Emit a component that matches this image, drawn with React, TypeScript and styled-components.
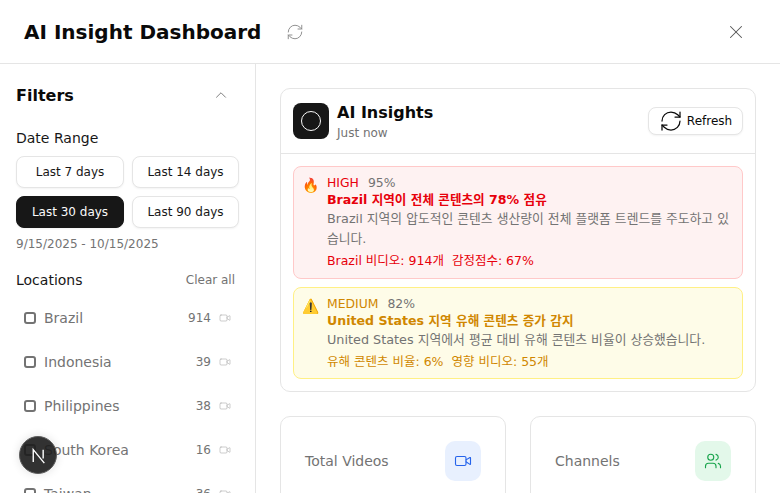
import styled, { createGlobalStyle } from "styled-components";
import { RefreshCw, X, ChevronUp, Video, Users } from "lucide-react";

const GlobalStyle = createGlobalStyle`
  * { box-sizing: border-box; }
  html, body { margin: 0; height: 100%; overflow: hidden; background: #fff; }
  body {
    font-family: "DejaVu Sans", "Noto Sans CJK KR", sans-serif;
    color: #0a0a0a;
  }
`;

const dateRanges = [
  { label: "Last 7 days", active: false },
  { label: "Last 14 days", active: false },
  { label: "Last 30 days", active: true },
  { label: "Last 90 days", active: false },
];

const locations = [
  { name: "Brazil", count: 914 },
  { name: "Indonesia", count: 39 },
  { name: "Philippines", count: 38 },
  { name: "South Korea", count: 16 },
  { name: "Taiwan", count: 36 },
];

export default function App() {
  return (
    <Page>
      <GlobalStyle />
      <Header>
        <HeaderLeft>
          <Title>AI Insight Dashboard</Title>
          <RefreshCw size={18} color="#8a8a8a" strokeWidth={1.25} />
        </HeaderLeft>
        <X size={22} color="#555" strokeWidth={1.1} />
      </Header>
      <Body>
        <Sidebar>
          <FiltersHead>
            <FiltersTitle>Filters</FiltersTitle>
            <ChevronUp size={18} color="#555" strokeWidth={1} />
          </FiltersHead>
          <SectionLabel>Date Range</SectionLabel>
          <RangeGrid>
            {dateRanges.map((r) => (
              <RangeButton key={r.label} $active={r.active}>
                {r.label}
              </RangeButton>
            ))}
          </RangeGrid>
          <DateText>9/15/2025 - 10/15/2025</DateText>
          <LocationsHead>
            <SectionLabel>Locations</SectionLabel>
            <ClearAll>Clear all</ClearAll>
          </LocationsHead>
          <LocationList>
            {locations.map((l) => (
              <LocationRow key={l.name}>
                <Check />
                <LocationName>{l.name}</LocationName>
                <Count>{l.count}</Count>
                <Video size={12} color="#9a9a9a" strokeWidth={1} />
              </LocationRow>
            ))}
          </LocationList>
        </Sidebar>
        <Main>
          <InsightCard>
            <InsightHead>
              <InsightBrand>
                <LogoBox>
                  <LogoRing />
                </LogoBox>
                <div>
                  <InsightTitle>AI Insights</InsightTitle>
                  <InsightTime>Just now</InsightTime>
                </div>
              </InsightBrand>
              <RefreshButton>
                <RefreshCw size={24} color="#0a0a0a" strokeWidth={1.25} />
                Refresh
              </RefreshButton>
            </InsightHead>
            <AlertList>
              <Alert $level="high">
                <AlertIcon>🔥</AlertIcon>
                <div>
                  <AlertMeta>
                    <Level $level="high">HIGH</Level>
                    <Pct>95%</Pct>
                  </AlertMeta>
                  <AlertTitle $level="high">Brazil 지역이 전체 콘텐츠의 78% 점유</AlertTitle>
                  <AlertText>
                    Brazil 지역의 압도적인 콘텐츠 생산량이 전체 플랫폼 트렌드를 주도하고 있습니다.
                  </AlertText>
                  <AlertStats $level="high">
                    <span>Brazil 비디오: 914개</span>
                    <span>감정점수: 67%</span>
                  </AlertStats>
                </div>
              </Alert>
              <Alert $level="medium">
                <AlertIcon>⚠️</AlertIcon>
                <div>
                  <AlertMeta>
                    <Level $level="medium">MEDIUM</Level>
                    <Pct>82%</Pct>
                  </AlertMeta>
                  <AlertTitle $level="medium">United States 지역 유해 콘텐츠 증가 감지</AlertTitle>
                  <AlertText>United States 지역에서 평균 대비 유해 콘텐츠 비율이 상승했습니다.</AlertText>
                  <AlertStats $level="medium">
                    <span>유해 콘텐츠 비율: 6%</span>
                    <span>영향 비디오: 55개</span>
                  </AlertStats>
                </div>
              </Alert>
            </AlertList>
          </InsightCard>
          <StatGrid>
            <StatCard>
              <StatLabel>Total Videos</StatLabel>
              <StatIcon $bg="#e8f0fe">
                <Video size={18} color="#2563eb" strokeWidth={1.5} />
              </StatIcon>
            </StatCard>
            <StatCard>
              <StatLabel>Channels</StatLabel>
              <StatIcon $bg="#e3f8ea">
                <Users size={18} color="#16a34a" strokeWidth={1.5} />
              </StatIcon>
            </StatCard>
          </StatGrid>
        </Main>
      </Body>
      <NextBadge>
        <svg width="21" height="21" viewBox="0 0 18 18" fill="none">
          <path d="M4.5 14.5V4L14 15.5M13 4v7.5" stroke="#fff" strokeWidth="1.2" />
        </svg>
      </NextBadge>
    </Page>
  );
}

const Page = styled.div`
  height: 493px;
  overflow: hidden;
  display: flex;
  flex-direction: column;
`;

const Header = styled.header`
  height: 64px;
  flex: none;
  display: flex;
  align-items: center;
  justify-content: space-between;
  padding: 0 33px 0 24px;
  border-bottom: 1px solid #e5e5e5;
`;

const HeaderLeft = styled.div`
  display: flex;
  align-items: center;
  gap: 25px;
`;

const Title = styled.h1`
  margin: 0;
  font-size: 20px;
  line-height: 28px;
  font-weight: 700;
`;

const Body = styled.div`
  flex: 1;
  min-height: 0;
  display: flex;
`;

const Sidebar = styled.aside`
  width: 256px;
  flex: none;
  padding: 19px 16px 0;
  border-right: 1px solid #e5e5e5;
  overflow: hidden;
`;

const FiltersHead = styled.div`
  display: flex;
  align-items: center;
  justify-content: space-between;
  height: 24px;
  padding-right: 9px;
  margin-bottom: 21px;
`;

const FiltersTitle = styled.h2`
  margin: 0;
  font-size: 16px;
  font-weight: 700;
`;

const SectionLabel = styled.div`
  font-size: 14px;
  line-height: 20px;
  color: #171717;
`;

const RangeGrid = styled.div`
  display: grid;
  grid-template-columns: 108px 107px;
  gap: 8px;
  margin-top: 8px;
`;

const RangeButton = styled.button<{ $active: boolean }>`
  height: 32px;
  padding: 0;
  font-family: inherit;
  font-size: 12px;
  border-radius: 8px;
  border: 1px solid ${(p) => (p.$active ? "#171717" : "#e5e5e5")};
  background: ${(p) => (p.$active ? "#171717" : "#fff")};
  color: ${(p) => (p.$active ? "#fafafa" : "#171717")};
  box-shadow: 0 1px 2px rgba(0, 0, 0, 0.05);
`;

const DateText = styled.div`
  margin-top: 8px;
  font-size: 12px;
  line-height: 16px;
  color: #737373;
`;

const LocationsHead = styled.div`
  display: flex;
  align-items: center;
  justify-content: space-between;
  margin-top: 18px;
  padding-right: 4px;
`;

const ClearAll = styled.span`
  font-size: 12px;
  color: #737373;
`;

const LocationList = styled.div`
  margin-top: 6px;
`;

const LocationRow = styled.div`
  height: 44px;
  display: flex;
  align-items: center;
  padding: 0 8px;
`;

const Check = styled.span`
  width: 12px;
  height: 12px;
  border: 2px solid #737373;
  border-radius: 3px;
  margin-right: 8px;
`;

const LocationName = styled.span`
  flex: 1;
  font-size: 14px;
  color: #737373;
`;

const Count = styled.span`
  font-size: 12px;
  color: #737373;
  margin-right: 8px;
`;

const Main = styled.main`
  flex: 1;
  min-width: 0;
  padding: 24px;
  overflow: hidden;
`;

const InsightCard = styled.section`
  border: 1px solid #e5e5e5;
  border-radius: 10px;
`;

const InsightHead = styled.div`
  height: 65px;
  display: flex;
  align-items: center;
  justify-content: space-between;
  padding: 0 12px;
  border-bottom: 1px solid #e5e5e5;
`;

const InsightBrand = styled.div`
  display: flex;
  align-items: center;
  gap: 8px;
`;

const LogoBox = styled.div`
  width: 36px;
  height: 36px;
  border-radius: 8px;
  background: #171717;
  display: flex;
  align-items: center;
  justify-content: center;
`;

const LogoRing = styled.span`
  width: 20px;
  height: 20px;
  border-radius: 50%;
  border: 1.75px solid #fafafa;
`;

const InsightTitle = styled.div`
  font-size: 16px;
  line-height: 24px;
  font-weight: 700;
`;

const InsightTime = styled.div`
  font-size: 12px;
  line-height: 16px;
  color: #737373;
`;

const RefreshButton = styled.button`
  height: 28px;
  width: 95px;
  padding: 0;
  display: flex;
  align-items: center;
  justify-content: center;
  gap: 4px;
  font-family: inherit;
  font-size: 12px;
  color: #0a0a0a;
  background: #fff;
  border: 1px solid #e5e5e5;
  border-radius: 8px;
  box-shadow: 0 1px 2px rgba(0, 0, 0, 0.05);
`;

const AlertList = styled.div`
  display: flex;
  flex-direction: column;
  gap: 8px;
  padding: 12px;
`;

type LevelName = "high" | "medium";

const levelColor = (l: LevelName) => (l === "high" ? "#e7000b" : "#d08700");

const Alert = styled.div<{ $level: LevelName }>`
  display: flex;
  gap: 8px;
  padding: 8px 9px;
  border-radius: 8px;
  border: 1px solid ${(p) => (p.$level === "high" ? "#ffc9c9" : "#fff085")};
  background: ${(p) => (p.$level === "high" ? "#fef2f2" : "#fefce8")};
`;

const AlertIcon = styled.span`
  width: 16px;
  flex: none;
  font-size: 14px;
  line-height: 20px;
  margin-left: -1px;
  margin-right: 1px;
`;

const AlertMeta = styled.div`
  display: flex;
  gap: 9px;
  font-size: 12.4px;
  line-height: 16px;
`;

const Level = styled.span<{ $level: LevelName }>`
  color: ${(p) => levelColor(p.$level)};
`;

const Pct = styled.span`
  color: #737373;
`;

const AlertTitle = styled.div<{ $level: LevelName }>`
  font-size: 12.6px;
  line-height: 18px;
  font-weight: 700;
  color: ${(p) => levelColor(p.$level)};
`;

const AlertText = styled.p`
  margin: 0;
  font-size: 12.8px;
  line-height: 20px;
  color: #737373;
`;

const AlertStats = styled.div<{ $level: LevelName }>`
  display: flex;
  gap: 8px;
  margin-top: 3px;
  font-size: 12.5px;
  line-height: 17.5px;
  color: ${(p) => levelColor(p.$level)};
`;

const StatGrid = styled.div`
  display: grid;
  grid-template-columns: 1fr 1fr;
  gap: 24px;
  margin-top: 24px;
`;

const StatCard = styled.div`
  height: 120px;
  display: flex;
  align-items: flex-start;
  justify-content: space-between;
  padding: 24px;
  border: 1px solid #e5e5e5;
  border-radius: 10px;
`;

const StatLabel = styled.span`
  font-size: 14px;
  line-height: 40px;
  color: #737373;
`;

const StatIcon = styled.div<{ $bg: string }>`
  width: 36px;
  height: 40px;
  border-radius: 10px;
  background: ${(p) => p.$bg};
  display: flex;
  align-items: center;
  justify-content: center;
`;

const NextBadge = styled.div`
  position: fixed;
  left: 19px;
  top: 436px;
  width: 38px;
  height: 38px;
  border-radius: 50%;
  background: rgba(28, 28, 28, 0.9);
  border: 1px solid #5c5c5c;
  box-shadow: 0 0 10px rgba(0, 0, 0, 0.12);
  display: flex;
  align-items: center;
  justify-content: center;
`;
